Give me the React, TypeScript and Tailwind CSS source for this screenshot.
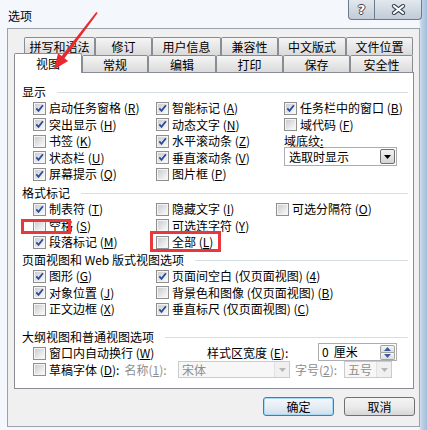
import React from "react";

function Box({ on = false }: { on?: boolean }) {
  return (
    <span className="block w-[13px] h-[13px] shrink-0 border border-[#8f8f8f] bg-[#f4f4f4] p-px">
      <span className="flex w-full h-full bg-linear-to-br from-[#c9ccd2] via-[#e2e3e5] to-[#fafafa]">
        {on && (
          <svg viewBox="0 0 9 9" className="w-full h-full">
            <path d="M1.3 4.4 L3.5 6.8 L7.9 1.3" fill="none" stroke="#2c4c99" strokeWidth="1.8" />
          </svg>
        )}
      </span>
    </span>
  );
}

function Key({ k }: { k: string }) {
  return (
    <>
      (<span className="underline underline-offset-[1px]">{k}</span>)
    </>
  );
}

function Opt({ t, k, on }: { t: string; k: string; on?: boolean }) {
  return (
    <div className="h-[16.5px] flex items-center gap-[3px] whitespace-nowrap">
      <Box on={on} />
      <span>
        {t} <Key k={k} />
      </span>
    </div>
  );
}

function Heading({ title, className = "" }: { title: React.ReactNode; className?: string }) {
  return (
    <div className={`h-[16px] flex items-center pl-[7px] pr-[5px] ${className}`}>
      <span className="whitespace-nowrap">{title}</span>
      <span className="flex-1 h-px bg-[#d5dde5] ml-[11px]" />
    </div>
  );
}

function Arrow({ color = "#000" }: { color?: string }) {
  return (
    <svg width="7" height="4" viewBox="0 0 7 4">
      <path d="M0 0 L7 0 L3.5 4 Z" fill={color} />
    </svg>
  );
}

function Combo({ text, w, disabled }: { text: string; w: string; disabled?: boolean }) {
  return (
    <div
      className={`${w} h-[17px] flex items-center border ${
        disabled ? "border-[#c9cbcf] bg-[#f7f7f7] text-[#8d8d8d]" : "border-[#abadb3] bg-white"
      }`}
    >
      <span className="flex-1 pl-[3px] whitespace-nowrap leading-[14px]">{text}</span>
      <span
        className={`w-[15px] h-full flex items-center justify-center ${
          disabled ? "bg-[#f0f0f0] border-l border-[#e2e2e2]" : ""
        }`}
      >
        <Arrow color={disabled ? "#b5b5b5" : "#000"} />
      </span>
    </div>
  );
}

const row1: [string, string][] = [
  ["拼写和语法", "w-[71px]"],
  ["修订", "w-[57px]"],
  ["用户信息", "w-[69px]"],
  ["兼容性", "w-[57px]"],
  ["中文版式", "w-[68px]"],
  ["文件位置", "w-[67px]"],
];

const row2: [string, string][] = [
  ["常规", "w-[66px]"],
  ["编辑", "w-[68px]"],
  ["打印", "w-[67px]"],
  ["保存", "w-[67px]"],
  ["安全性", "w-[63px]"],
];

const tabCls =
  "h-full flex items-center justify-center border border-b-0 border-[#898c95] rounded-t-[2px] bg-linear-to-b from-[#f5f5f5] to-[#dadada] whitespace-nowrap";

export default function App() {
  return (
    <div className="relative w-[427px] h-[430px] overflow-hidden bg-[linear-gradient(90deg,#f4f7fb_0,#f4f7fb_419px,#c3d5e8_421px,#a3bedb_427px)] font-['Noto_Sans_CJK_SC',sans-serif] text-[12px] leading-none text-black">
      {/* Title bar */}
      <div className="h-[28px] flex justify-between items-start">
        <span className="ml-[8px] mt-[9px] leading-[13px]">选项</span>
        <div className="flex h-[20px] mr-[5px]">
          <div className="w-[27px] h-full flex items-center justify-center border border-t-0 border-[#6c7a8b] rounded-bl-[4px] bg-linear-to-b from-[#e2e8ee] to-[#c1cbd7]">
            <span className="font-['DejaVu_Sans',sans-serif] font-bold text-[13px] text-white [text-shadow:1px_0_#3b4656,-1px_0_#3b4656,0_1px_#3b4656,0_-1px_#3b4656]">
              ?
            </span>
          </div>
          <div className="w-[47px] h-full flex items-center justify-center border border-t-0 border-l-0 border-[#6c7a8b] rounded-br-[4px] bg-linear-to-b from-[#e2e8ee] to-[#c1cbd7]">
            <svg width="15" height="11" viewBox="0 0 15 11">
              <path d="M3 2 L12 9 M12 2 L3 9" stroke="#3b4656" strokeWidth="4.2" strokeLinecap="round" />
              <path d="M3 2 L12 9 M12 2 L3 9" stroke="#fff" strokeWidth="2.2" strokeLinecap="round" />
            </svg>
          </div>
        </div>
      </div>

      {/* Dialog body */}
      <div className="ml-[7px] w-[413px] h-[399px] border border-[#9aa1a9] bg-[#f0f0f0] flex flex-col pt-[8px]">
        <div className="flex h-[18px] ml-[16px]">
          {row1.map(([t, w]) => (
            <div key={t} className={`${w} ${tabCls}`}>
              {t}
            </div>
          ))}
        </div>
        <div className="flex h-[17px] ml-[6px]">
          <div className="w-[68px] h-[20px] -mt-[2px] relative z-10 bg-white border border-b-0 border-[#898c95] rounded-t-[2px] flex items-center justify-center">
            视图
          </div>
          {row2.map(([t, w]) => (
            <div key={t} className={`${w} ${tabCls} pt-[1px]`}>
              {t}
            </div>
          ))}
        </div>

        {/* Tab panel */}
        <div className="ml-[6px] w-[400px] h-[317px] border border-[#898c95] bg-white pt-[11px]">
          <Heading title="显示" />
          <div className="flex pl-[18px]">
            <div className="w-[123px]">
              <Opt t="启动任务窗格" k="R" on />
              <Opt t="突出显示" k="H" on />
              <Opt t="书签" k="K" />
              <Opt t="状态栏" k="U" on />
              <Opt t="屏幕提示" k="Q" on />
            </div>
            <div className="w-[128px]">
              <Opt t="智能标记" k="A" on />
              <Opt t="动态文字" k="N" on />
              <Opt t="水平滚动条" k="Z" on />
              <Opt t="垂直滚动条" k="V" on />
              <Opt t="图片框" k="P" />
            </div>
            <div className="flex-1">
              <Opt t="任务栏中的窗口" k="B" on />
              <Opt t="域代码" k="F" />
              <div className="h-[14px] pt-[1px] leading-[13px]">
                域底纹<span className="underline underline-offset-[1px]">:</span>
              </div>
              <div className="w-[113px] h-[19px] flex items-center border border-[#abadb3] bg-white">
                <span className="flex-1 pl-[4px]">选取时显示</span>
                <span className="w-[15px] h-[15px] mr-[1px] flex items-center justify-center border border-[#707070] rounded-[2px] bg-linear-to-b from-[#f3f3f3] to-[#d4d4d4]">
                  <Arrow />
                </span>
              </div>
            </div>
          </div>

          <Heading title="格式标记" className="mt-[2.5px]" />
          <div className="flex pl-[18px]">
            <div className="w-[123px]">
              <Opt t="制表符" k="T" on />
              <Opt t="空格" k="S" />
              <Opt t="段落标记" k="M" on />
            </div>
            <div className="w-[120px]">
              <Opt t="隐藏文字" k="I" />
              <Opt t="可选连字符" k="Y" />
              <Opt t="全部" k="L" />
            </div>
            <div className="flex-1">
              <Opt t="可选分隔符" k="O" />
            </div>
          </div>

          <Heading title="页面视图和 Web 版式视图选项" className="mt-[1.5px]" />
          <div className="flex pl-[18px]">
            <div className="w-[123px]">
              <Opt t="图形" k="G" on />
              <Opt t="对象位置" k="J" on />
              <Opt t="正文边框" k="X" />
            </div>
            <div className="flex-1">
              <Opt t="页面间空白 (仅页面视图)" k="4" on />
              <Opt t="背景色和图像 (仅页面视图)" k="B" />
              <Opt t="垂直标尺 (仅页面视图)" k="C" on />
            </div>
          </div>

          <Heading title="大纲视图和普通视图选项" className="mt-[11.5px]" />
          <div className="pl-[18px]">
            <div className="h-[16.5px] flex items-center whitespace-nowrap">
              <div className="w-[174px] flex items-center gap-[3px]">
                <Box />
                <span>
                  窗口内自动换行 <Key k="W" />
                </span>
              </div>
              <span className="w-[111px]">
                样式区宽度 <Key k="E" />:
              </span>
              <div className="w-[79px] h-[18px] -mt-[2px] flex items-center border border-[#abadb3] bg-white">
                <span className="flex-1 pl-[3px]">
                  0<span className="ml-[5px]">厘米</span>
                </span>
                <div className="w-[15px] h-[15px] mr-[1px] flex flex-col">
                  <span className="flex-1 flex items-center justify-center border border-[#a3a3a3] rounded-t-[2px] bg-linear-to-b from-[#f6f6f6] to-[#dedede]">
                    <svg width="7" height="4" viewBox="0 0 7 4">
                      <path d="M0 4 L3.5 0 L7 4 Z" fill="#3d5b9c" />
                    </svg>
                  </span>
                  <span className="flex-1 flex items-center justify-center border border-t-0 border-[#a3a3a3] rounded-b-[2px] bg-linear-to-b from-[#f6f6f6] to-[#dedede]">
                    <Arrow color="#3d5b9c" />
                  </span>
                </div>
              </div>
            </div>
            <div className="h-[16.5px] flex items-center whitespace-nowrap">
              <div className="w-[145px] flex items-center gap-[3px]">
                <Box />
                <span>
                  草稿字体 <Key k="D" />:
                </span>
                <span className="ml-[2px] text-[#8d8d8d]">
                  名称<Key k="1" />:
                </span>
              </div>
              <Combo text="宋体" w="w-[112px]" disabled />
              <span className="w-[54px] pl-[5px] text-[#8d8d8d]">
                字号<Key k="2" />:
              </span>
              <Combo text="五号" w="w-[48px]" disabled />
            </div>
          </div>
        </div>

        {/* Buttons */}
        <div className="flex justify-end gap-[10px] mr-[4px] mt-[8px]">
          <button className="w-[71px] h-[19px] rounded-[3px] border border-[#3c7fb1] shadow-[inset_0_0_0_1px_#a9d9f5] bg-linear-to-b from-[#f2f7fb] via-[#e6eef5] to-[#d3dde6] text-[12px]">
            确定
          </button>
          <button className="w-[71px] h-[19px] rounded-[3px] border border-[#707070] bg-linear-to-b from-[#f3f3f3] via-[#ebebeb] to-[#d7d7d7] text-[12px]">
            取消
          </button>
        </div>
      </div>

      {/* Red annotations */}
      <div className="absolute z-20 left-[21px] top-[219px] w-[50px] h-[15px] border-[3px] border-[#e8383b]" />
      <div className="absolute z-20 left-[150px] top-[231px] w-[71px] h-[21px] border-[3px] border-[#e8383b]" />
      <svg className="absolute z-20 inset-0 pointer-events-none" width="427" height="430">
        <polygon
          points="96.3,11.9 97.7,13.1 64.5,58.2 68.1,61 54,69.5 58.1,53.2 61.7,56"
          fill="#e8292e"
        />
      </svg>
    </div>
  );
}
